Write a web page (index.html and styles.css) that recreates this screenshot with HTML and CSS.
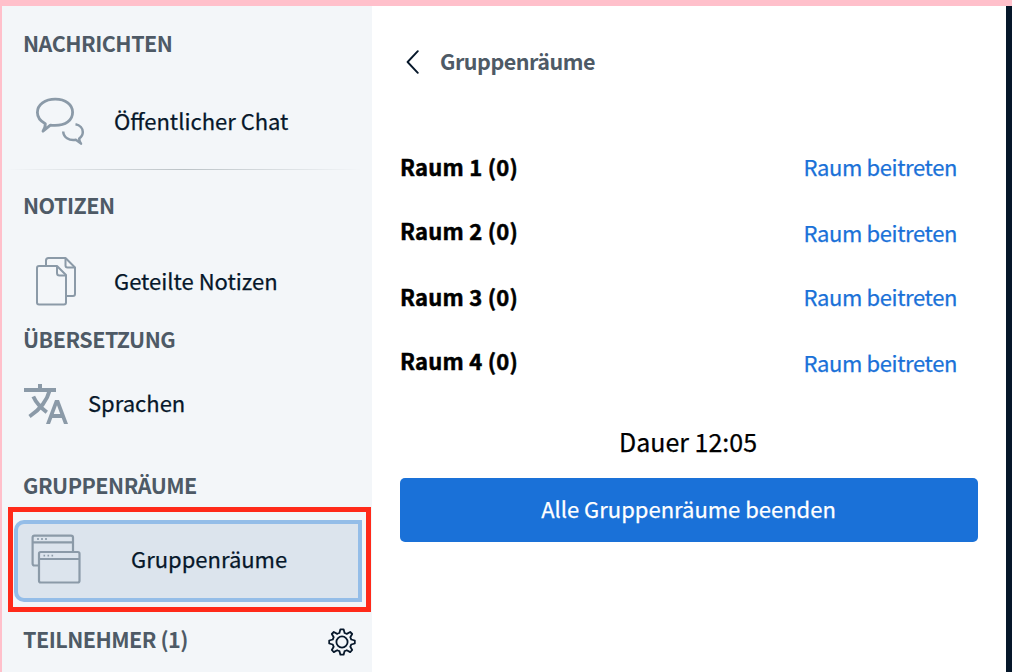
FILE: index.html
```html
<!DOCTYPE html>
<html lang="de">
<head>
<meta charset="utf-8">
<title>Gruppenräume</title>
<link rel="stylesheet" href="styles.css">
</head>
<body>
<div class="app">
  <aside class="sidebar">
    <h2 class="heading messages">Nachrichten</h2>
    <div class="item chat">
      <svg class="icon" width="50" height="50" viewBox="0 0 50 50" fill="none" stroke="#8b9aa8" stroke-width="2.8" stroke-linejoin="round" stroke-linecap="round">
        <path d="M10.3 27.700C5.200 25 2.400 21 2.400 16.500C2.400 8.800 10 3.200 20.300 3.200C30.600 3.200 37.600 8.800 37.600 16.300C37.600 24.500 30.600 29.400 20 29.400C18.500 29.400 17 29.400 15.400 29.200L8 35.200C9.500 32.500 10.500 30.300 10.300 27.700Z"/>
        <path d="M40.500 28.200C45 29 47.800 32.300 47.800 36C47.800 38.800 46.500 41 44.200 42.500C44.100 44.300 44.700 45.700 46 47.600L40.800 43.800C34 45 28.500 41.300 28.200 35.500" stroke-width="2.5" stroke-linecap="butt"/>
      </svg>
      <span class="label">Öffentlicher Chat</span>
    </div>
    <div class="divider"></div>
    <h2 class="heading">Notizen</h2>
    <div class="item notes">
      <svg class="icon" width="50" height="50" viewBox="0 0 50 50" fill="none" stroke="#8b9aa8" stroke-width="2" stroke-linejoin="round">
        <path d="M11 9V4.500Q11 2 13.500 2H30.500L40 11.500V38Q40 40 38 40H31.500"/>
        <path d="M30.500 2V9.500Q30.500 11.500 32.500 11.500H40"/>
        <path d="M4 10H22L31 19V46.500Q31 48.500 29 48.500H4Q2 48.500 2 46.500V12Q2 10 4 10Z"/>
        <path d="M22 10V17Q22 19.500 24.500 19.500H31"/>
      </svg>
      <span class="label">Geteilte Notizen</span>
    </div>
    <h2 class="heading">Übersetzung</h2>
    <div class="item languages">
      <svg class="icon" width="44" height="40" viewBox="0 0 44 40" fill="none" stroke="#8b9aa8">
        <path d="M0 6H32M16 0V6" stroke-width="4"/>
        <path d="M25.800 6C23 17 16 25.500 5.500 32.500M9.300 12.500C12 18.500 16.500 23.500 22.800 28.200" stroke-width="3.900"/>
        <path fill="#8b9aa8" stroke="none" fill-rule="evenodd" d="M31 16H35L44 40H40L37.750 34H28.250L26 40H22ZM33 21.300L29.750 30H36.250Z"/>
      </svg>
      <span class="label">Sprachen</span>
    </div>
    <h2 class="heading">Gruppenräume</h2>
    <div class="item rooms">
      <svg class="icon" width="50" height="50" viewBox="0 0 50 50" fill="none" stroke="#8b9aa8" stroke-width="2.200" stroke-linejoin="round">
        <path d="M7 31.500H3.500Q1.600 31.500 1.600 29.500V3.500Q1.600 1.600 3.500 1.600H40Q42 1.600 42 3.500V17M1.600 8.300H42"/>
        <rect x="8" y="18" width="40.500" height="30.500" rx="1.700"/>
        <path d="M8 25H48.500"/>
        <path d="M6.200 5H16.200M12.500 21.600H22.500" stroke-width="1.800" stroke-dasharray="1.600 2.400"/>
      </svg>
      <span class="label">Gruppenräume</span>
      <span class="marker"></span>
    </div>
    <div class="participants">
      <h2 class="heading">Teilnehmer (1)</h2>
      <svg class="gear" width="28" height="28" viewBox="0 0 28 28" fill="none" stroke="#06172a" stroke-width="1.800" stroke-linejoin="round">
        <path d="M12.400 1.300H15.600L16.600 5Q18 5.400 18.800 5.900L22.200 4L24.200 6L22.300 9.300Q22.900 10.300 23.200 11.500L26.800 12.500V15.500L23.200 16.500Q22.900 17.700 22.300 18.800L24.200 22L22.200 24.100L18.800 22.200Q17.800 22.800 16.600 23.100L15.600 26.700H12.400L11.400 23.100Q10.200 22.800 9.200 22.200L5.800 24.100L3.800 22L5.700 18.800Q5.100 17.700 4.800 16.500L1.200 15.500V12.500L4.800 11.500Q5.100 10.300 5.700 9.300L3.800 6L5.800 4L9.200 5.900Q10.200 5.300 11.400 5Z"/>
        <circle cx="14" cy="14" r="5.600"/>
      </svg>
    </div>
  </aside>
  <main class="panel">
    <header class="title-bar">
      <svg width="14" height="24" viewBox="0 0 14 24" fill="none" stroke="#06172a" stroke-width="1.900" stroke-linecap="round" stroke-linejoin="round"><path d="M11.800 1.200L1.600 12L11.800 22.800"/></svg>
      <h1 class="title">Gruppenräume</h1>
    </header>
    <div class="room-list">
      <div class="names">
        <span>Raum 1 (0)</span><span>Raum 2 (0)</span><span>Raum 3 (0)</span><span>Raum 4 (0)</span>
      </div>
      <div class="links">
        <a>Raum beitreten</a><a>Raum beitreten</a><a>Raum beitreten</a><a>Raum beitreten</a>
      </div>
    </div>
    <p class="duration">Dauer 12:05</p>
    <button class="end">Alle Gruppenräume beenden</button>
  </main>
</div>
</body>
</html>
```
FILE: styles.css
```css
* { box-sizing: border-box; }
body {
  margin: 0;
  overflow: hidden;
  font-family: "Noto Sans CJK SC", "Noto Sans", sans-serif;
  font-size: 22px;
  line-height: 32px;
  color: #06172a;
  -webkit-text-stroke: 0.25px;
}
h1, h2, p { margin: 0; }
svg { display: block; flex: none; }
.app {
  display: flex;
  width: 1012px;
  height: 672px;
  border-top: 6px solid #ffc0cb;
  border-left: 2px solid #ffc0cb;
}
.sidebar { width: 370px; background: #f3f6f9; padding-top: 20px; }
.heading {
  height: 32px;
  padding: 1px 0 0 21px;
  font-size: 21.5px;
  font-weight: 700;
  letter-spacing: -0.5px;
  text-transform: uppercase;
  color: #4e5a66;
  -webkit-text-stroke: 0;
}
.item { display: flex; align-items: center; }
.item .label { white-space: nowrap; margin-top: -2px; }
.chat { height: 64px; margin-top: 31px; padding-left: 33px; gap: 29px; }
.divider {
  height: 1px;
  margin: 16px 10px 18px 4px;
  background: linear-gradient(to right, transparent, #bcc3c7, transparent);
}
.notes { height: 62px; margin: 30px 0 10px; padding-left: 33px; gap: 29px; }
.languages { height: 40px; margin: 30px 0 44px; padding-left: 22px; gap: 20px; }
.item.languages .label { margin-top: -4px; }
.rooms {
  position: relative;
  height: 82px;
  margin: 20px 10px 17px 12px;
  padding: 0 0 4px 13px;
  gap: 50px;
  border: 4px solid #94bde8;
  border-radius: 10px 0 0 10px;
  background: #dce4ed;
}
.item.rooms .label { margin-top: -2px; }
.marker {
  position: absolute;
  left: -10px;
  top: -17px;
  width: 363px;
  height: 105px;
  border: 5px solid #ff2a1a;
}
.participants { display: flex; align-items: center; justify-content: space-between; padding-right: 16px; }
.gear { margin-top: 9px; }
.panel { width: 634px; background: #fff; padding: 38px 28px 0; }
.title-bar { display: flex; align-items: center; height: 36px; gap: 20px; padding-left: 6px; }
.title {
  margin-top: -3px;
  font-size: 21.5px;
  font-weight: 700;
  letter-spacing: -0.48px;
  color: #4e5a66;
  -webkit-text-stroke: 0;
}
.room-list { display: flex; justify-content: space-between; padding: 70px 21px 0 0; color: #000; }
.names, .links { display: grid; }
.names {
  grid-template-rows: 64px 66px 64px 32px;
  font-weight: 700;
  letter-spacing: 0.25px;
  -webkit-text-stroke: 0.5px;
}
.links { grid-template-rows: 66px 64px 66px 32px; letter-spacing: -0.38px; color: #1a71d8; }
.duration { margin: 45px 2px 0 0; height: 36px; line-height: 36px; font-size: 25px; text-align: center; color: #000; }
.end {
  display: block;
  width: 578px;
  height: 64px;
  margin-top: 19px;
  padding: 0 1px 4px 0;
  border: 0;
  border-radius: 5px;
  background: #1a71d8;
  color: #fff;
  font: inherit;
  -webkit-text-stroke: 0.25px;
}
.app::after { content: ""; flex: 1; background: #06172a; }
```
